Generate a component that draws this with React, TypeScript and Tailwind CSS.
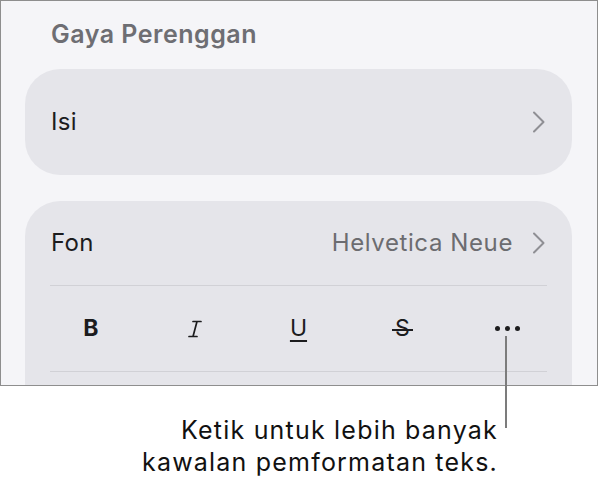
import React from "react";

const Chevron = () => (
  <svg width="13" height="22" viewBox="0 0 13 22" fill="none">
    <path d="M2 1.5l9.5 9.5-9.5 9.5" stroke="#8f8f94" strokeWidth="2" strokeLinecap="round" strokeLinejoin="round" />
  </svg>
);

const ItalicIcon = () => (
  <svg width="14" height="18" viewBox="0 0 14 18" fill="none">
    <path d="M5 1.5h8M1 16.5h8M9 1.5L5 16.5" stroke="#1c1c1e" strokeWidth="1.7" strokeLinecap="round" />
  </svg>
);

const Divider = () => <div className="mx-[25px] h-px bg-[#d1d1d6]" />;

export default function App() {
  return (
    <div className="relative w-[599px] h-[481px] bg-white font-['Inter','Liberation_Sans',sans-serif] text-[#1c1c1e]">
      {/* screenshot frame */}
      <div className="w-[598px] h-[386px] border border-[#8e8e8e] bg-[#f5f5f8] overflow-hidden pl-[24px] pr-[25px] pt-[18px]">
        <div className="pl-[26px] text-[25px] leading-[30px] font-semibold tracking-[0.5px] text-[#6e6e73]">Gaya Perenggan</div>

        <div className="mt-[20px] h-[106px] rounded-[35px] bg-[#e5e5ea] flex items-center justify-between pl-[26px] pr-[27px]">
          <span className="text-[24px] leading-[30px] tracking-[0.3px]">Isi</span>
          <Chevron />
        </div>

        <div className="mt-[26px] h-[300px] rounded-t-[35px] bg-[#e5e5ea]">
          <div className="h-[84px] flex items-center justify-between pl-[26px] pr-[27px]">
            <span className="text-[24px] leading-[30px] tracking-[0.3px]">Fon</span>
            <div className="flex items-center gap-[19px]">
              <span className="text-[24px] leading-[30px] tracking-[0.6px] text-[#6c6c70]">Helvetica Neue</span>
              <Chevron />
            </div>
          </div>
          <Divider />
          <div className="h-[85px] grid grid-cols-5 items-center px-[14px]">
            <div className="flex justify-center">
              <span className="text-[23px] leading-none font-bold">B</span>
            </div>
            <div className="flex justify-center">
              <ItalicIcon />
            </div>
            <div className="flex justify-center">
              <span className="text-[23px] leading-none underline decoration-[2px] underline-offset-[4px]">U</span>
            </div>
            <div className="flex justify-center">
              <span className="relative text-[23px] leading-none">
                S
                <span className="absolute left-[-3px] right-[-3px] top-[52%] h-[2px] bg-[#1c1c1e]" />
              </span>
            </div>
            <div className="flex justify-center gap-[5px] pl-[2px]">
              <span className="w-[5px] h-[5px] rounded-full bg-[#1c1c1e]" />
              <span className="w-[5px] h-[5px] rounded-full bg-[#1c1c1e]" />
              <span className="w-[5px] h-[5px] rounded-full bg-[#1c1c1e]" />
            </div>
          </div>
          <Divider />
        </div>
      </div>

      {/* callout line */}
      <div className="absolute left-[505px] top-[336px] w-[2px] h-[92px] bg-[#7c7c7c]" />

      <div className="mt-[28px] pr-[101px] text-right text-[25px] leading-[32px] tracking-[1.2px] text-[#111]">
        <div>Ketik untuk lebih banyak</div>
        <div>kawalan pemformatan teks.</div>
      </div>
    </div>
  );
}
